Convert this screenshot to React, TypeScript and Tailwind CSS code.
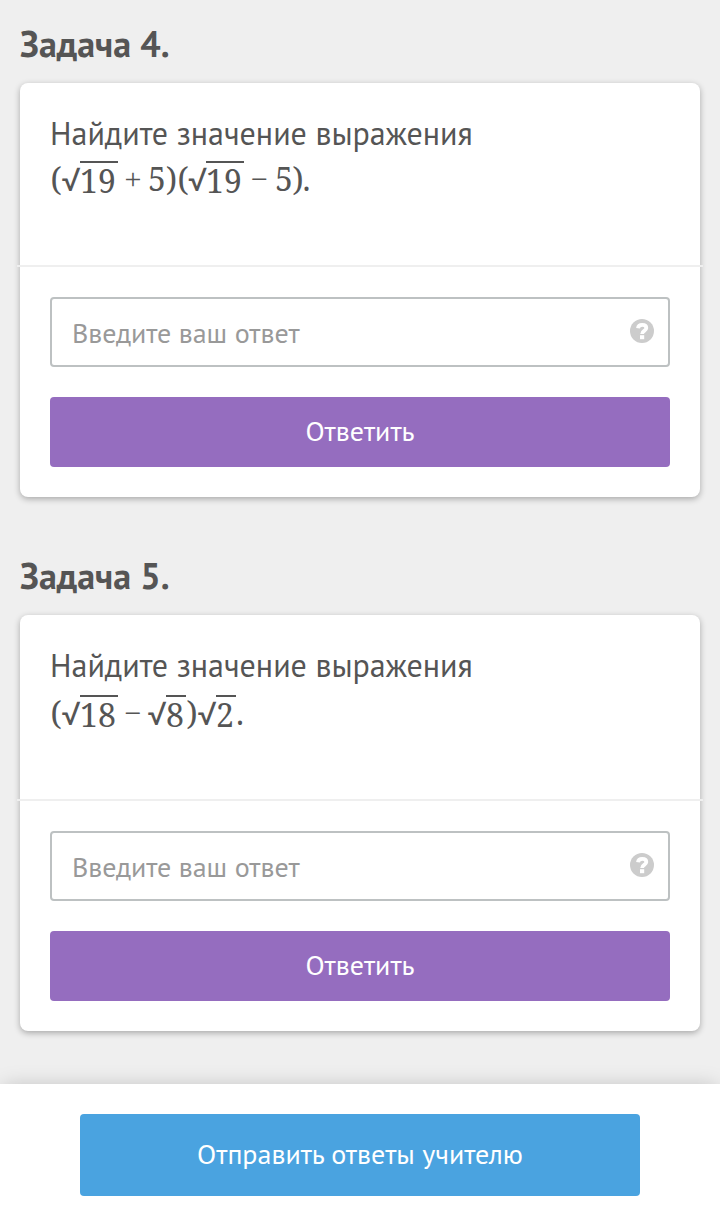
import React from "react";

type Token = { text: string; width: string; kind?: "root" | "radicand" | "operator" };

const product: Token[] = [
  { text: "(", width: "w-[12px]" },
  { text: "√", width: "w-[18px]", kind: "root" },
  { text: "19", width: "w-[38px]", kind: "radicand" },
  { text: "+", width: "w-[30px]", kind: "operator" },
  { text: "5", width: "w-[18px]" },
  { text: ")", width: "w-[11px]" },
  { text: "(", width: "w-[12px]" },
  { text: "√", width: "w-[17px]", kind: "root" },
  { text: "19", width: "w-[38px]", kind: "radicand" },
  { text: "−", width: "w-[31px]", kind: "operator" },
  { text: "5", width: "w-[18px]" },
  { text: ")", width: "w-[10px]" },
  { text: ".", width: "w-[7px]" },
];

const difference: Token[] = [
  { text: "(", width: "w-[12px]" },
  { text: "√", width: "w-[18px]", kind: "root" },
  { text: "18", width: "w-[38px]", kind: "radicand" },
  { text: "−", width: "w-[30px]", kind: "operator" },
  { text: "√", width: "w-[18px]", kind: "root" },
  { text: "8", width: "w-[20px]", kind: "radicand" },
  { text: ")", width: "w-[12px]" },
  { text: "√", width: "w-[18px]", kind: "root" },
  { text: "2", width: "w-[20px]", kind: "radicand" },
  { text: ".", width: "w-[8px]" },
];

function Formula({ tokens }: { tokens: Token[] }) {
  return (
    <div className="flex h-[46px] items-start font-['Noto_Serif','Liberation_Serif',serif] text-[32px] leading-[36px]">
      {tokens.map((t, i) => {
        if (t.kind === "radicand")
          return (
            <span key={i} className={`${t.width} mt-px flex h-[36px] justify-center border-t-2 border-[#555] pr-[2px]`}>
              {t.text}
            </span>
          );
        if (t.kind === "root")
          return (
            <span key={i} className={`${t.width} flex justify-center pt-[2px] font-['Roboto',sans-serif] text-[33px]`}>
              {t.text}
            </span>
          );
        if (t.kind === "operator")
          return (
            <span key={i} className={`${t.width} flex justify-center pt-px font-['Liberation_Serif',serif] text-[30px]`}>
              {t.text}
            </span>
          );
        return (
          <span key={i} className={`${t.width} flex justify-center pt-px`}>
            {t.text}
          </span>
        );
      })}
    </div>
  );
}

function HelpIcon() {
  return (
    <svg width="24" height="24" viewBox="0 0 24 24" aria-hidden="true">
      <circle cx="12" cy="12" r="12" fill="#ccc" />
      <path d="M8 9.2C8.300 6.600 10 5.800 12.200 5.800c2.500 0 4.100 1.200 4.100 3.200 0 3-4.200 2.800-4.200 5.900" fill="none" stroke="#fff" strokeWidth="3.800" />
      <path d="M10 16.200h4.200v4H10z" fill="#fff" />
    </svg>
  );
}

function Task({ title, tokens, bodyClass, formulaClass }: { title: string; tokens: Token[]; bodyClass: string; formulaClass: string }) {
  return (
    <section>
      <h2 className="h-[63px] text-[36px] font-bold leading-[48px]">{title}</h2>
      <div className="rounded-[8px] bg-white shadow-[0_2px_6px_rgba(0,0,0,0.3)]">
        <div className={`px-[30px] pt-[29px] ${bodyClass}`}>
          <p className="text-[32px] leading-[42px]">Найдите значение выражения</p>
          <div className={formulaClass}>
            <Formula tokens={tokens} />
          </div>
        </div>
        <div className="-mx-[3px] h-[2px] bg-[#efefef]" />
        <div className="flex flex-col gap-[30px] p-[30px]">
          <div className="flex h-[70px] items-center justify-between rounded-[4px] border-2 border-[#bdc1c2] pl-[20px] pr-[14px]">
            <span className="pt-[2px] text-[28px] leading-[36px] text-[#999]">Введите ваш ответ</span>
            <span className="-mt-[2px]">
              <HelpIcon />
            </span>
          </div>
          <button className="h-[70px] rounded-[4px] bg-[#956dbf] pb-[2px] text-[28px] leading-[36px] text-white">Ответить</button>
        </div>
      </div>
    </section>
  );
}

export default function App() {
  return (
    <div className="flex h-[1226px] w-[720px] flex-col overflow-hidden bg-[#efefef] font-['PT_Sans','Noto_Sans',sans-serif] text-[#555]">
      <main className="flex h-[1084px] shrink-0 flex-col gap-[55px] px-[20px] pt-[20px]">
        <Task title="Задача 4." tokens={product} bodyClass="h-[182px]" formulaClass="pt-[6px]" />
        <Task title="Задача 5." tokens={difference} bodyClass="h-[184px]" formulaClass="pt-[8px]" />
      </main>
      <footer className="flex h-[142px] shrink-0 justify-center bg-white pt-[30px] shadow-[0_0_20px_-4px_rgba(0,0,0,0.25)]">
        <button className="h-[82px] w-[560px] rounded-[4px] bg-[#4aa3e0] pb-[2px] text-[28px] leading-[36px] text-white">
          Отправить ответы учителю
        </button>
      </footer>
    </div>
  );
}
